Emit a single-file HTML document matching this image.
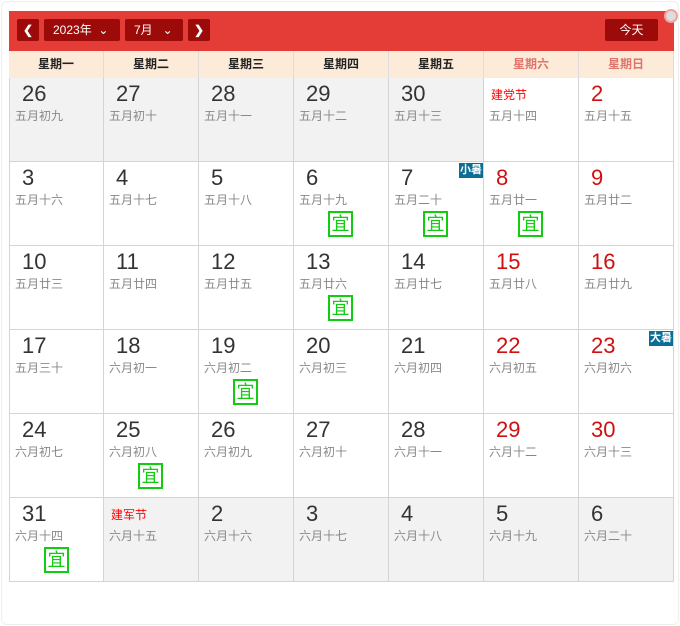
<html><head><style>
body{margin:0;background:#fff;font-family:"Liberation Sans","Noto Sans CJK SC",sans-serif;width:680px;height:626px;position:relative;overflow:hidden}
.frame{position:absolute;left:1px;top:1px;width:676px;height:622px;border:1px solid #eee;border-radius:6px}
.hd{position:absolute;left:9px;top:11px;width:665px;height:40px;background:#e43c36}
.b{position:absolute;top:8px;height:22px;background:#9c0a0a;color:#fff;font-size:12px;line-height:22px;border-radius:2px}
.wk{position:absolute;left:9px;top:51px;width:665px;height:27px;background:#fdebd9;display:flex}
.wk div{width:95px;box-sizing:border-box;border-right:1px solid #ddd;text-align:center;font-size:12px;font-weight:bold;line-height:27px;color:#222}
.c{position:absolute;width:95px;height:84px;box-sizing:border-box;border-right:1px solid #d4d4d4;border-bottom:1px solid #d4d4d4;background:#fff}
.g{background:#f2f2f2}
.n{position:absolute;left:12px;top:3px;font-size:22px;color:#333}
.r{color:#d01010}
.l{position:absolute;left:5px;top:29px;font-size:12px;color:#888}
.f{position:absolute;left:7px;top:8px;font-size:12px;color:#f00}
.y{position:absolute;left:34px;top:49px;width:21px;height:22px;border:2px solid #1c1;color:#1c1;font-size:18px;line-height:22px;text-align:center}
.t{position:absolute;right:0;top:1px;background:#0a6e96;color:#fff;font-size:11px;font-weight:bold;padding:0 1px;line-height:15px}
</style></head><body>
<div class="frame"></div>
<div class="hd">
<div class="b" style="left:8px;width:22px;text-align:center;font-weight:bold">&#10094;</div>
<div class="b" style="left:35px;width:76px;padding-left:9px;box-sizing:border-box">2023年 &nbsp;⌄</div>
<div class="b" style="left:116px;width:58px;padding-left:9px;box-sizing:border-box">7月 &nbsp;&nbsp;⌄</div>
<div class="b" style="left:179px;width:22px;text-align:center;font-weight:bold">&#10095;</div>
<div class="b" style="left:596px;width:53px;text-align:center">今天</div>
</div>
<div style="position:absolute;left:664px;top:9px;width:14px;height:14px;border-radius:50%;background:#ddd;border:2px solid #f4a0a0;box-sizing:border-box"></div>
<div class="wk"><div>星期一</div><div>星期二</div><div>星期三</div><div>星期四</div><div>星期五</div><div style="color:#e0736a">星期六</div><div style="color:#e0736a">星期日</div></div>
<div id="g"></div>
<script>
var d=[["26","五月初九",1],["27","五月初十",1],["28","五月十一",1],["29","五月十二",1],["30","五月十三",1],["","五月十四",0,0,"建党节"],["2","五月十五"],
["3","五月十六"],["4","五月十七"],["5","五月十八"],["6","五月十九",0,1],["7","五月二十",0,1,0,"小暑"],["8","五月廿一",0,1],["9","五月廿二"],
["10","五月廿三"],["11","五月廿四"],["12","五月廿五"],["13","五月廿六",0,1],["14","五月廿七"],["15","五月廿八"],["16","五月廿九"],
["17","五月三十"],["18","六月初一"],["19","六月初二",0,1],["20","六月初三"],["21","六月初四"],["22","六月初五"],["23","六月初六",0,0,0,"大暑"],
["24","六月初七"],["25","六月初八",0,1],["26","六月初九"],["27","六月初十"],["28","六月十一"],["29","六月十二"],["30","六月十三"],
["31","六月十四",0,1],["","六月十五",1,0,"建军节"],["2","六月十六",1],["3","六月十七",1],["4","六月十八",1],["5","六月十九",1],["6","六月二十",1]];
var h="";d.forEach(function(e,i){var c=i%7,r=Math.floor(i/7);var red=(c>=5&&!e[2]);
h+='<div class="c'+(e[2]?' g':'')+'" style="left:'+(9+c*95)+'px;top:'+(78+r*84)+'px'+(c==0?';border-left:1px solid #d4d4d4':'')+'">'+
(e[0]?'<div class="n'+(red?' r':'')+'">'+e[0]+'</div>':'')+(e[4]?'<div class="f">'+e[4]+'</div>':'')+'<div class="l">'+e[1]+'</div>'+(e[3]?'<div class="y">宜</div>':'')+(e[5]?'<div class="t">'+e[5]+'</div>':'')+'</div>';});
document.getElementById("g").innerHTML=h;
</script>
</body></html>
